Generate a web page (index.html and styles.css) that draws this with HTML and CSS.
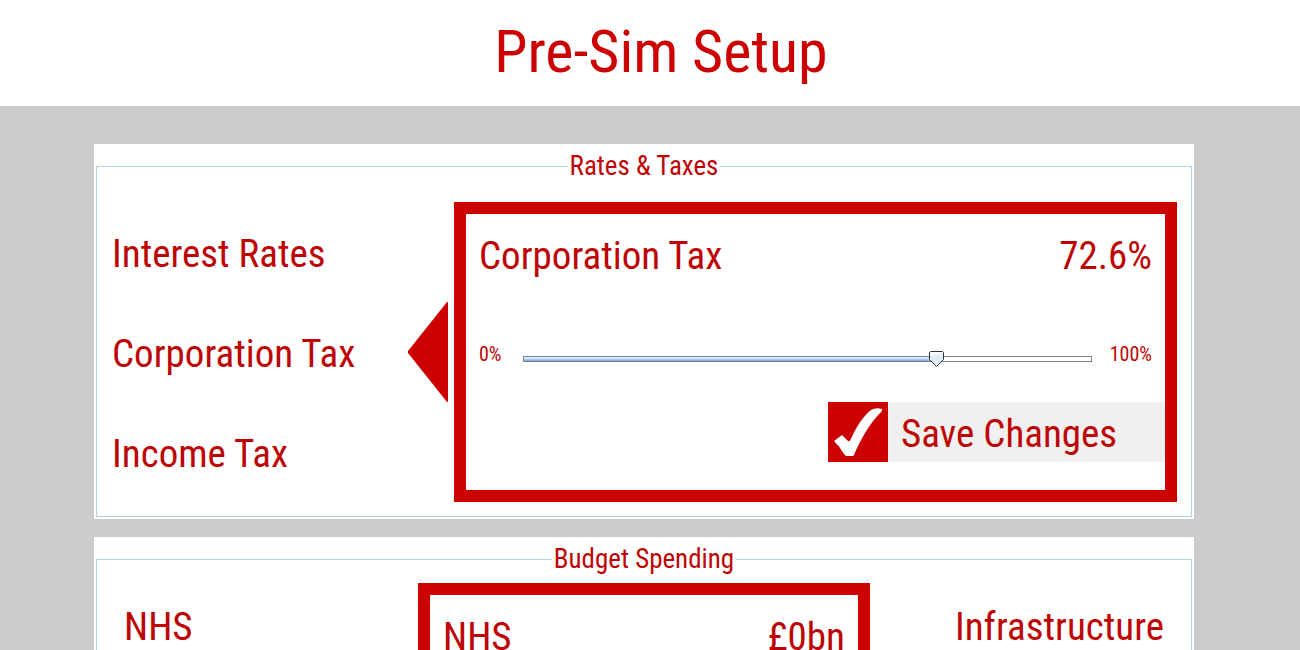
FILE: index.html
```html
<!DOCTYPE html>
<html lang="en">
<head>
<meta charset="utf-8">
<title>Pre-Sim Setup</title>
<link rel="stylesheet" href="styles.css">
</head>
<body>
<header class="page-header"><h1 class="page-title">Pre-Sim Setup</h1></header>
<main class="content">
  <section class="panel">
    <fieldset class="group">
      <legend class="group-title">Rates &amp; Taxes</legend>
      <div class="rates">
        <ul class="options">
          <li class="option"><button class="option-button" type="button">Interest Rates</button></li>
          <li class="option">
            <button class="option-button" type="button" aria-pressed="true">Corporation Tax</button>
            <svg class="pointer" viewBox="0 0 40 100" aria-hidden="true"><path d="M40 0V100H39L0 51V49L39 0Z"/></svg>
          </li>
          <li class="option"><button class="option-button" type="button">Income Tax</button></li>
        </ul>
        <div class="editor">
          <div class="editor-head">
            <label for="corporation-tax">Corporation Tax</label>
            <output for="corporation-tax">72.6%</output>
          </div>
          <div class="slider-row">
            <span class="limit">0%</span>
            <input class="slider" id="corporation-tax" type="range" min="0" max="100" step="0.1" value="73.3">
            <span class="limit limit-max">100%</span>
          </div>
          <button class="save" type="button">
            <svg class="save-icon" viewBox="0 0 60 60" aria-hidden="true"><path d="M6 39L14 33L20 39H22C27 27 35 14 43 8Q48 5 54 7V9C43 20 34 34 26 53L25 54H18L16 52Q12 45 6 39Z"/></svg>
            <span class="save-label">Save Changes</span>
          </button>
        </div>
      </div>
    </fieldset>
  </section>
  <section class="panel">
    <fieldset class="group">
      <legend class="group-title">Budget Spending</legend>
      <div class="budget">
        <div class="department"><button class="option-button" type="button" aria-pressed="true">NHS</button></div>
        <div class="editor">
          <div class="editor-head"><span>NHS</span><output>£0bn</output></div>
        </div>
        <div class="department department-right"><button class="option-button" type="button">Infrastructure</button></div>
      </div>
    </fieldset>
  </section>
</main>
</body>
</html>
```
FILE: styles.css
```css
* { box-sizing: border-box; }

body {
  margin: 0;
  height: 100vh;
  overflow: hidden;
  background: #ccc;
  color: #bd0505;
  font-family: "Agency FB", "Roboto Condensed", Roboto, sans-serif;
  font-size: 39px;
  line-height: 48px;
}

button {
  padding: 0;
  border: 0;
  background: none;
  color: inherit;
  font: inherit;
  text-align: left;
  white-space: nowrap;
}

.page-header {
  padding: 12px 0 14px 22px;
  background: #fff;
  text-align: center;
}

.page-title {
  margin: 0;
  color: #c00;
  font-size: 60px;
  font-weight: normal;
  line-height: 80px;
}

.content {
  display: flex;
  flex-direction: column;
  gap: 18px;
  padding: 38px 106px 0 94px;
}

.panel {
  padding: 0 2px 2px;
  background: #fff;
}

.group {
  min-width: 0;
  margin: 0;
  padding: 0;
  border: 1px solid #b8cfd9;
}

.group-title {
  margin: 0 auto;
  padding: 0 2px;
  font-size: 27px;
  line-height: 45px;
}

.rates {
  display: grid;
  grid-template-columns: 342fr 723fr;
  padding: 13px 14px 14px 15px;
}

.options {
  margin: 0;
  padding: 0;
  list-style: none;
}

.option {
  display: flex;
  align-items: center;
  justify-content: space-between;
  height: 100px;
}

.option-button { padding-top: 4px; }

.pointer {
  width: 40px;
  height: 100px;
  margin-right: 6px;
  fill: #c00;
}

.editor {
  display: flex;
  flex-direction: column;
  border: 12px solid #c00;
}

.editor-head {
  display: flex;
  align-items: center;
  justify-content: space-between;
  height: 84px;
  padding: 0 13px;
}

.slider-row {
  display: flex;
  align-items: center;
  height: 104px;
  padding: 8px 13px 0;
  font-size: 20px;
  line-height: 24px;
}

.limit { width: 44px; }

.limit-max {
  width: 60px;
  text-align: right;
}

.slider {
  flex: 1;
  min-width: 0;
  height: 16px;
  margin: 10px 0 0;
  appearance: none;
  background: none;
}

.slider::-webkit-slider-runnable-track {
  height: 6px;
  border: 1px solid #748591;
  background:
    linear-gradient(#e4eefb, #c5d7f3 50%, #7f9dcc) 0 0 / 73% 100% no-repeat,
    #fff;
}

.slider::-webkit-slider-thumb {
  width: 15px;
  height: 16px;
  margin-top: -6px;
  appearance: none;
  background: url("data:image/svg+xml,%3Csvg xmlns='http://www.w3.org/2000/svg' viewBox='0 0 15 16'%3E%3ClinearGradient id='g' x2='0' y2='1'%3E%3Cstop stop-color='%23fff'/%3E%3Cstop offset='.4' stop-color='%23dce9f6'/%3E%3Cstop offset='1' stop-color='%23edf5ff'/%3E%3C/linearGradient%3E%3Cpath d='M1.5.5h12l1 1V8.5L7.5 15.5L.5 8.5V1.5Z' fill='url(%23g)' stroke='%23283540'/%3E%3C/svg%3E") no-repeat;
}

.save {
  display: flex;
  align-items: center;
  align-self: flex-end;
  gap: 13px;
  width: 337px;
  margin-bottom: 28px;
  background: #f0f0f0;
}

.save-icon {
  flex: none;
  width: 60px;
  height: 60px;
  background: #c00;
  fill: #fff;
}

.save-label { padding-top: 4px; }

.budget {
  display: grid;
  grid-template-columns: 1fr 452px 1fr;
  padding: 1px 27px 0;
}

.department {
  display: flex;
  align-items: center;
  height: 84px;
}

.department-right {
  justify-content: flex-end;
}
```
